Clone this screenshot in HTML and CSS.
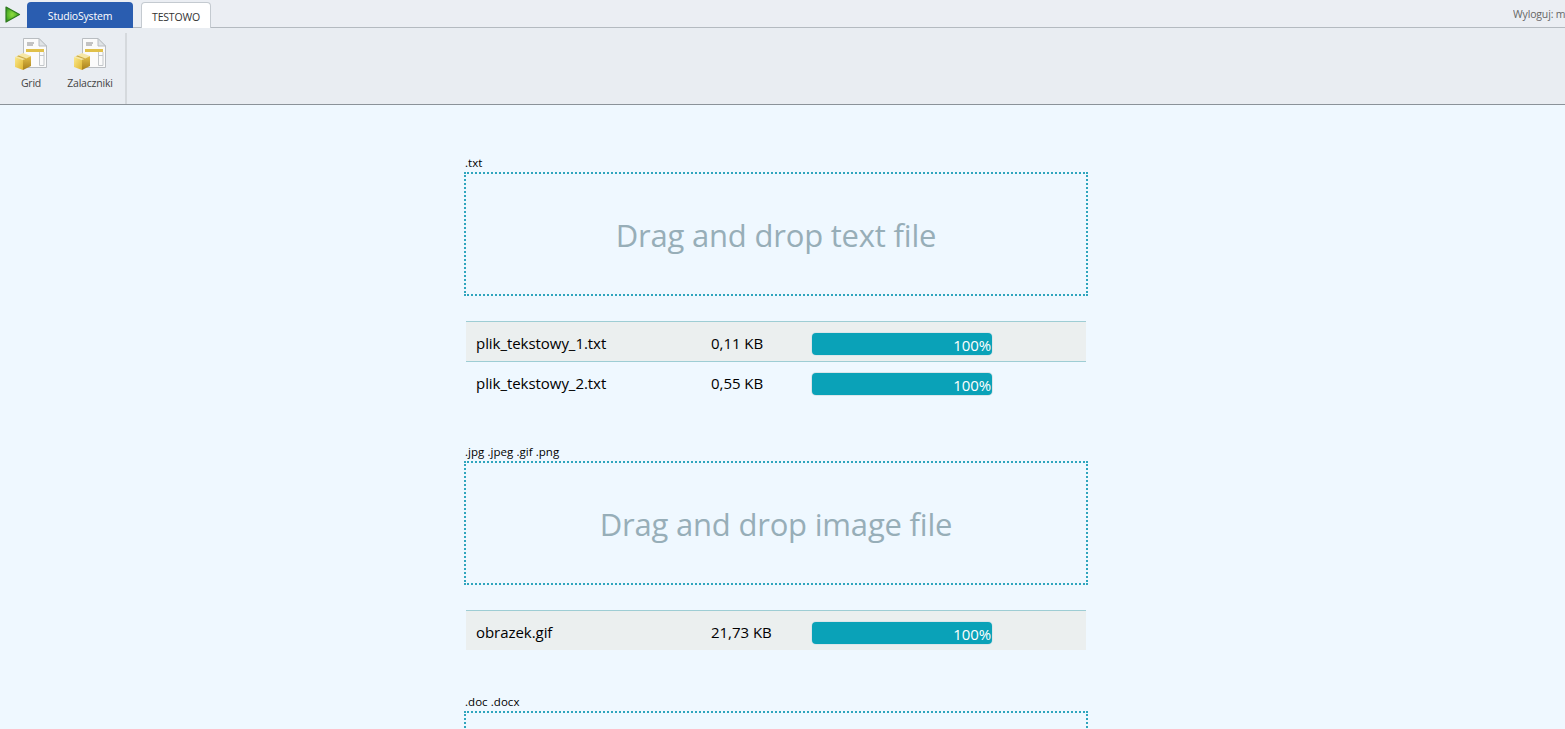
FILE: index.html
```html
<!DOCTYPE html>
<html lang="pl">
<head>
<meta charset="utf-8">
<title>StudioSystem</title>
<link rel="stylesheet" href="styles.css">
</head>
<body>
<header class="tabbar">
  <svg class="play" width="16" height="17" viewBox="0 0 16 17"><defs><radialGradient id="pg" cx=".45" cy=".5" r=".6"><stop offset="0" stop-color="#8fdc3e"/><stop offset=".6" stop-color="#57b52a"/><stop offset="1" stop-color="#2d8a1c"/></radialGradient></defs><path d="M1 1 L14.5 8.5 L1 16 Z" fill="url(#pg)" stroke="#2f7a1e" stroke-width="1.2" stroke-linejoin="round"/></svg>
  <div class="tab tab-blue">StudioSystem</div>
  <div class="tab tab-white">TESTOWO</div>
  <div class="logout">Wyloguj: m</div>
</header>
<nav class="ribbon">
  <div class="ribbon-group">
    <div class="ribbon-btn btn-grid">
      <svg class="ribbon-icon" width="34" height="33" viewBox="0 0 34 33">
        <use href="#docbox"/>
      </svg>
      <span>Grid</span>
    </div>
    <div class="ribbon-btn btn-zal">
      <svg class="ribbon-icon" width="34" height="33" viewBox="0 0 34 33">
        <use href="#docbox"/>
      </svg>
      <span>Zalaczniki</span>
    </div>
  </div>
</nav>
<svg class="defs" width="0" height="0">
  <defs>
    <linearGradient id="bl" x1="0" y1="0" x2="1" y2="1"><stop offset="0" stop-color="#fbe98c"/><stop offset="1" stop-color="#e0b62f"/></linearGradient>
    <linearGradient id="br" x1="0" y1="0" x2="0" y2="1"><stop offset="0" stop-color="#e3c04a"/><stop offset="1" stop-color="#a87f1a"/></linearGradient>
    <g id="docbox">
      <path d="M9.5 .5 H25 L32.5 8 V29.5 H9.5 Z" fill="#fbfbfb" stroke="#b9bdc1"/>
      <path d="M25 .5 V8 H32.5 Z" fill="#dfe3e6" stroke="#b9bdc1"/>
      <path d="M13 5 H20 M13 7 H19" stroke="#8a8a8a" stroke-width="1"/>
      <rect x="12" y="11" width="18" height="3" fill="#e0c04a"/>
      <path d="M25.5 14 V27.5 H30 V14 M25.5 17.5 H30" stroke="#c3c7ca" fill="none"/>
      <path d="M1 19 L9 15 L17 18 L9 22 Z" fill="#f6e7a6"/>
      <path d="M9 22 V32 L17 28 V18 Z" fill="url(#br)"/>
      <path d="M1 19 L9 22 V32 L1 29 Z" fill="url(#bl)"/>
      <path d="M4.5 17.5 L12.5 20.5 L11 21 L3 18.3 Z" fill="#c9a948"/>
    </g>
  </defs>
</svg>
<main class="content">
  <section class="upload first">
    <div class="ext">.txt</div>
    <div class="drop">Drag and drop text file</div>
    <div class="files">
      <div class="file odd"><span class="name">plik_tekstowy_1.txt</span><span class="size">0,11 KB</span><div class="bar">100%</div></div>
      <div class="file"><span class="name">plik_tekstowy_2.txt</span><span class="size">0,55 KB</span><div class="bar">100%</div></div>
    </div>
  </section>
  <section class="upload">
    <div class="ext">.jpg .jpeg .gif .png</div>
    <div class="drop">Drag and drop image file</div>
    <div class="files">
      <div class="file odd"><span class="name">obrazek.gif</span><span class="size">21,73 KB</span><div class="bar">100%</div></div>
    </div>
  </section>
  <section class="upload">
    <div class="ext">.doc .docx</div>
    <div class="drop"></div>
  </section>
</main>
</body>
</html>
```
FILE: styles.css
```css
* { box-sizing: border-box; }
html, body { margin: 0; height: 729px; overflow: hidden; }
body { background: #eff8ff; font-family: "Open Sans", "Noto Sans", sans-serif; color: #000; }
.defs { display: block; height: 0; }
.tabbar { height: 28px; background: #ebeef3; border-bottom: 1px solid #b4bac0; display: flex; align-items: flex-end; padding-left: 4px; }
.play { align-self: flex-start; margin: 6px 6px 0 1px; }
.tab { height: 26px; margin-bottom: -1px; display: flex; align-items: center; justify-content: center; font-size: 10.5px; letter-spacing: -.2px; border-radius: 4px 4px 0 0; }
.tab-blue { width: 106px; background: #2a5db0; color: #fff; padding-top: 2px; }
.tab-white { width: 70px; margin-left: 8px; background: #fff; color: #333; border: 1px solid #c4cad0; border-bottom: 0; padding-top: 2px; }
.logout { margin-left: auto; align-self: flex-start; margin-top: 7px; font-size: 10.5px; color: #666; width: 52px; white-space: nowrap; overflow: hidden; letter-spacing: -.15px; }
.ribbon { height: 77px; padding-top: 5px; background: #e9edf2; border-bottom: 1px solid #8b9299; }
.ribbon-group { height: 71px; width: 127px; border-right: 2px solid #d5d9dd; display: flex; }
.ribbon-btn { display: flex; flex-direction: column; align-items: center; font-size: 10.5px; color: #444; letter-spacing: -.2px; }
.ribbon-icon { display: block; margin-top: 5px; margin-bottom: 5px; }
.btn-grid { width: 60px; padding-left: 2px; }
.btn-zal { width: 60px; }
.content { margin-left: 464px; width: 624px; padding-top: 50px; }
.upload { margin-bottom: 44px; }
.upload.first { margin-bottom: 43px; }
.ext { height: 17px; padding-left: 1px; font-size: 11.5px; line-height: 15px; letter-spacing: .05px; }
.drop { height: 124px; border: 2px dotted #2fa5bd; color: #97aeb8; font-size: 31px; display: flex; align-items: center; justify-content: center; letter-spacing: -.2px; padding-top: 2px; }
.files { margin: 25px 2px 0; width: 620px; }
.file { height: 40px; border-top: 1px solid #9ecdd4; display: flex; align-items: center; font-size: 15px; letter-spacing: -.05px; padding-left: 10px; padding-top: 2px; }
.file.odd { background: #ebefef; }
.name { width: 235px; }
.size { width: 101px; font-size: 15px; letter-spacing: -.03px; }
.bar { width: 180px; height: 22px; margin: 3px 0 1px; background: #0aa2b8; box-shadow: 0 0 0 1px #dbe6ea; border-radius: 4px; color: #fff; font-size: 15px; line-height: 24px; text-align: right; letter-spacing: -.1px; padding-right: 1px; }
```
